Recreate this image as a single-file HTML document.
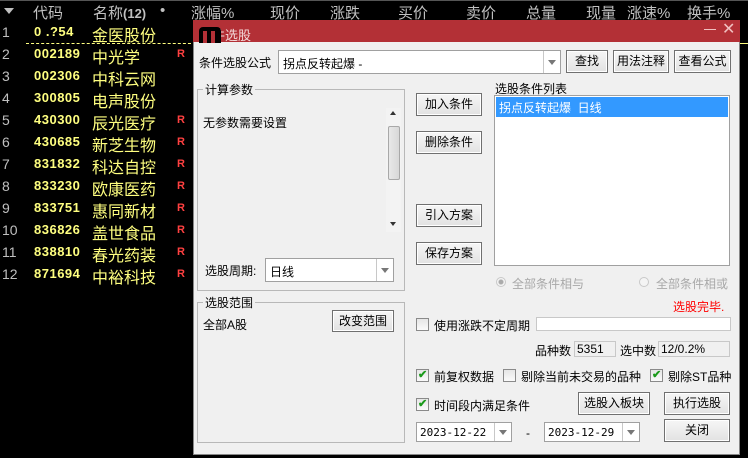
<!DOCTYPE html>
<html><head><meta charset="utf-8"><style>
*{margin:0;padding:0;box-sizing:border-box}
body{width:748px;height:458px;background:#000;position:relative;overflow:hidden;font-family:"Liberation Sans","Noto Sans CJK SC",sans-serif;font-size:12px;color:#000}
.a{position:absolute;white-space:nowrap}
.h{color:#c0c0c0;font-size:15px;top:2px}
.n{color:#c0c0c0;font-size:14px;left:2px}
.c{color:#ffff80;font-size:13px;font-weight:bold;left:34px;letter-spacing:.5px}
.m{color:#ffff80;font-size:16px;left:92px}
.r{color:#ff4040;font-size:11px;font-weight:bold;left:177px}
.btn{position:absolute;background:linear-gradient(#f6f6f6,#e2e2e2);border:1px solid #707070;box-shadow:inset 0 0 0 1px #fff;text-align:center;font-size:12px}
.box{position:absolute;background:#fff;border:1px solid #a0a0a0}
.grp{position:absolute;border:1px solid #b8b8b8}
.lbl{position:absolute;background:#f0f0f0;padding:0 2px;font-size:12px}
.cb{position:absolute;width:13px;height:13px;border:1px solid #8a8a8a;background:linear-gradient(#e6e6e6,#fafafa)}
.ck{color:#1a9a1a;font-size:11px;font-weight:bold;line-height:11px;padding-left:1px}
.dd{position:absolute;border-left:1px solid #c8c8c8;width:17px;top:0;bottom:0;right:0}
.dd:after{content:"";position:absolute;left:4px;top:50%;margin-top:-2px;border:4px solid transparent;border-top:5px solid #777;border-bottom:0}
</style></head><body>
<div class="a" style="left:0;top:0;width:748px;height:1px;background:#555"></div>
<div class="a" style="left:4px;top:8px;border:5px solid transparent;border-top:6px solid #c0c0c0"></div>
<div class="a h" style="left:33px">代码</div>
<div class="a h" style="left:93px">名称<b style="font-size:13px">(12)</b></div>
<div class="a h" style="left:160px">•</div>
<div class="a h" style="left:191px">涨幅%</div>
<div class="a h" style="left:270px">现价</div>
<div class="a h" style="left:330px">涨跌</div>
<div class="a h" style="left:398px">买价</div>
<div class="a h" style="left:466px">卖价</div>
<div class="a h" style="left:526px">总量</div>
<div class="a h" style="left:586px">现量</div>
<div class="a h" style="left:627px">涨速%</div>
<div class="a h" style="left:687px">换手%</div>

<div class="a n" style="top:24px">1</div><div class="a c" style="top:24px">0 .?54</div><div class="a m" style="top:22px">金医股份</div>
<div class="a" style="left:26px;top:43px;width:170px;border-top:1px dashed #ffff80"></div>
<div class="a n" style="top:46px">2</div><div class="a c" style="top:46px">002189</div><div class="a m" style="top:44px">中光学</div><div class="a r" style="top:48px">R</div>
<div class="a n" style="top:68px">3</div><div class="a c" style="top:68px">002306</div><div class="a m" style="top:66px">中科云网</div>
<div class="a n" style="top:90px">4</div><div class="a c" style="top:90px">300805</div><div class="a m" style="top:88px">电声股份</div>
<div class="a n" style="top:112px">5</div><div class="a c" style="top:112px">430300</div><div class="a m" style="top:110px">辰光医疗</div><div class="a r" style="top:114px">R</div>
<div class="a n" style="top:134px">6</div><div class="a c" style="top:134px">430685</div><div class="a m" style="top:132px">新芝生物</div><div class="a r" style="top:136px">R</div>
<div class="a n" style="top:156px">7</div><div class="a c" style="top:156px">831832</div><div class="a m" style="top:154px">科达自控</div><div class="a r" style="top:158px">R</div>
<div class="a n" style="top:178px">8</div><div class="a c" style="top:178px">833230</div><div class="a m" style="top:176px">欧康医药</div><div class="a r" style="top:180px">R</div>
<div class="a n" style="top:200px">9</div><div class="a c" style="top:200px">833751</div><div class="a m" style="top:198px">惠同新材</div><div class="a r" style="top:202px">R</div>
<div class="a n" style="top:222px">10</div><div class="a c" style="top:222px">836826</div><div class="a m" style="top:220px">盖世食品</div><div class="a r" style="top:224px">R</div>
<div class="a n" style="top:244px">11</div><div class="a c" style="top:244px">838810</div><div class="a m" style="top:242px">春光药装</div><div class="a r" style="top:246px">R</div>
<div class="a n" style="top:266px">12</div><div class="a c" style="top:266px">871694</div><div class="a m" style="top:264px">中裕科技</div><div class="a r" style="top:268px">R</div>
<div class="a" style="left:740px;top:43px;width:8px;height:1px;background:#ffff80"></div>

<!-- dialog -->
<div class="a" style="left:193px;top:20px;width:547px;height:435px;background:#f0f0f0;border:1px solid #888;border-top:0"></div>
<div class="a" style="left:193px;top:20px;width:547px;height:22px;background:#b33036"></div>
<div class="a" style="left:199px;top:25px;color:#f4dada;font-size:13px">条件选股</div>
<div class="a" style="left:199px;top:27px;width:22px;height:16px;background:#000;border-radius:4px 4px 0 0"></div>
<div class="a" style="left:203px;top:31px;width:4px;height:12px;background:#b33036"></div>
<div class="a" style="left:211px;top:31px;width:4px;height:12px;background:#b33036"></div>
<div class="a" style="left:704px;top:29px;width:12px;height:1px;background:#f0c0c0"></div>
<div class="a" style="left:722px;top:19px;color:#f0c0c0;font-size:16px">✕</div>

<div class="a" style="left:199px;top:54px;font-size:12px">条件选股公式</div>
<div class="box" style="left:278px;top:50px;width:283px;height:24px"><span class="a" style="left:4px;top:4px">拐点反转起爆 -</span><div class="dd"></div></div>
<div class="btn" style="left:566px;top:50px;width:42px;height:23px;line-height:21px">查找</div>
<div class="btn" style="left:613px;top:50px;width:56px;height:23px;line-height:21px">用法注释</div>
<div class="btn" style="left:674px;top:50px;width:57px;height:23px;line-height:21px">查看公式</div>

<div class="grp" style="left:197px;top:89px;width:208px;height:202px"></div>
<div class="lbl" style="left:203px;top:81px">计算参数</div>
<div class="a" style="left:203px;top:114px">无参数需要设置</div>
<div class="a" style="left:386px;top:108px;width:15px;height:124px;background:#f3f3f3"></div>
<div class="a" style="left:388px;top:126px;width:12px;height:54px;background:linear-gradient(90deg,#e8e8e8,#d8d8d8);border:1px solid #a8a8a8;border-radius:2px"></div>
<div class="a" style="left:390px;top:111px;border:3px solid transparent;border-bottom:4px solid #333;border-top:0"></div>
<div class="a" style="left:390px;top:222px;border:3px solid transparent;border-top:4px solid #333;border-bottom:0"></div>
<div class="a" style="left:205px;top:262px">选股周期:</div>
<div class="box" style="left:265px;top:258px;width:129px;height:24px"><span class="a" style="left:4px;top:4px">日线</span><div class="dd"></div></div>

<div class="btn" style="left:416px;top:93px;width:66px;height:23px;line-height:21px">加入条件</div>
<div class="btn" style="left:416px;top:131px;width:66px;height:23px;line-height:21px">删除条件</div>
<div class="btn" style="left:416px;top:204px;width:66px;height:23px;line-height:21px">引入方案</div>
<div class="btn" style="left:416px;top:242px;width:66px;height:23px;line-height:21px">保存方案</div>

<div class="a" style="left:495px;top:80px">选股条件列表</div>
<div class="box" style="left:494px;top:95px;width:236px;height:171px"><div class="a" style="left:1px;top:1px;width:232px;height:20px;background:#3399ff;color:#fff;padding:2px 3px">拐点反转起爆&nbsp; 日线</div></div>

<div class="a" style="left:496px;top:277px;width:10px;height:10px;border-radius:50%;border:1px solid #c8c8c8;background:radial-gradient(#aaa 2px,#f4f4f4 3px)"></div>
<div class="a" style="left:512px;top:275px;color:#a8a8a8">全部条件相与</div>
<div class="a" style="left:639px;top:277px;width:10px;height:10px;border-radius:50%;border:1px solid #c8c8c8;background:#f4f4f4"></div>
<div class="a" style="left:656px;top:275px;color:#a8a8a8">全部条件相或</div>

<div class="grp" style="left:197px;top:302px;width:208px;height:141px"></div>
<div class="lbl" style="left:203px;top:294px">选股范围</div>
<div class="a" style="left:203px;top:316px">全部A股</div>
<div class="btn" style="left:332px;top:310px;width:62px;height:22px;line-height:20px">改变范围</div>

<div class="a" style="left:673px;top:298px;color:#ff0000">选股完毕.</div>
<div class="cb" style="left:416px;top:318px"></div>
<div class="a" style="left:434px;top:317px">使用涨跌不定周期</div>
<div class="box" style="left:536px;top:317px;width:195px;height:14px;border-color:#c8c8c8"></div>
<div class="a" style="left:535px;top:342px">品种数</div>
<div class="box" style="left:574px;top:341px;width:42px;height:16px;background:#f0f0f0;border-color:#c8c8c8;padding-left:2px;line-height:14px">5351</div>
<div class="a" style="left:620px;top:342px">选中数</div>
<div class="box" style="left:658px;top:341px;width:72px;height:16px;background:#f0f0f0;border-color:#c8c8c8;padding-left:2px;line-height:14px">12/0.2%</div>

<div class="cb ck" style="left:416px;top:369px">✔</div><div class="a" style="left:434px;top:368px">前复权数据</div>
<div class="cb" style="left:503px;top:369px"></div><div class="a" style="left:521px;top:368px">剔除当前未交易的品种</div>
<div class="cb ck" style="left:650px;top:369px">✔</div><div class="a" style="left:668px;top:368px">剔除ST品种</div>
<div class="cb ck" style="left:416px;top:398px">✔</div><div class="a" style="left:434px;top:397px">时间段内满足条件</div>
<div class="btn" style="left:578px;top:392px;width:72px;height:23px;line-height:21px">选股入板块</div>
<div class="btn" style="left:664px;top:392px;width:66px;height:23px;line-height:21px">执行选股</div>
<div class="box" style="left:416px;top:422px;width:96px;height:20px"><span class="a" style="left:3px;top:3px;font-family:'DejaVu Sans Mono',monospace;font-size:11px">2023-12-22</span><div class="dd"></div></div>
<div class="a" style="left:526px;top:426px">-</div>
<div class="box" style="left:544px;top:422px;width:96px;height:20px"><span class="a" style="left:3px;top:3px;font-family:'DejaVu Sans Mono',monospace;font-size:11px">2023-12-29</span><div class="dd"></div></div>
<div class="btn" style="left:664px;top:419px;width:66px;height:23px;line-height:21px">关闭</div>
</body></html>
